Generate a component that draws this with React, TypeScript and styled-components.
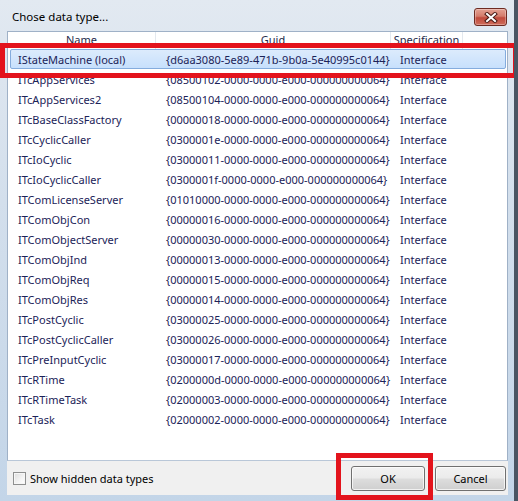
import React from "react";
import styled, { createGlobalStyle } from "styled-components";

const GlobalStyle = createGlobalStyle`
  html, body {
    margin: 0;
    padding: 0;
    background: #5d6570;
  }
  * {
    box-sizing: border-box;
  }
`;

const FONT = `"Noto Sans", "Open Sans", Arial, sans-serif`;

const Window = styled.main`
  position: relative;
  width: 518px;
  height: 501px;
  overflow: hidden;
  display: flex;
  flex-direction: column;
  background: linear-gradient(180deg, #e2e9f1 0%, #d3dfec 40%, #c3d5e8 100%);
  border-right: 4px solid #4a5563;
  font-family: ${FONT};
  font-size: 11px;
`;

const TitleBar = styled.header`
  height: 31px;
  flex: none;
  display: flex;
  justify-content: space-between;
  align-items: flex-start;
  padding: 0 7px 0 12px;

  .title {
    margin-top: 9px;
    font-size: 11.5px;
    color: #000;
  }
`;

const CloseBtn = styled.button`
  margin-top: 8px;
  width: 33px;
  height: 18px;
  padding: 0;
  border: 1px solid #6e2b22;
  border-radius: 3px;
  background: linear-gradient(180deg, #e4a193 0%, #d47c6b 45%, #c04a3c 55%, #cf6d5b 100%);
  box-shadow: inset 0 0 0 1px rgba(255, 255, 255, 0.3);
  display: flex;
  align-items: center;
  justify-content: center;
`;

const Client = styled.section`
  flex: 1;
  display: flex;
  flex-direction: column;
  margin: 0 6px 6px 7px;
  min-height: 0;
`;

const List = styled.div`
  flex: 1;
  background: #fff;
  border: 1px solid #9fb1c7;
  border-bottom-color: #b9c7d8;
  overflow: hidden;
`;

const COLS = "148px 235px 72px 1fr";

const Header = styled.div`
  display: grid;
  grid-template-columns: ${COLS};
  height: 17px;
  background: #fff;
  color: #1e2a4a;

  > span {
    display: flex;
    align-items: flex-start;
    justify-content: center;
    border-right: 1px solid #e3e8ee;
    line-height: 15px;
  }
  > span:last-child {
    border-right: none;
  }
`;

const Row = styled.div<{ $selected?: boolean }>`
  display: grid;
  grid-template-columns: ${COLS};
  height: 20px;
  align-items: center;
  color: #1b2358;
  margin: 0 1px 0 2px;
  border: 1px solid ${(p) => (p.$selected ? "#84acdd" : "transparent")};
  border-radius: 2px;
  background: ${(p) =>
    p.$selected ? "linear-gradient(180deg, #dcebfc 0%, #c7e0fc 100%)" : "transparent"};

  > span {
    white-space: nowrap;
  }
  .name {
    padding-left: 7px;
  }
  .guid {
    padding-left: 7px;
  }
  .spec {
    padding-left: 6px;
  }
`;

const Footer = styled.footer`
  height: 34px;
  flex: none;
  background: #f0f0f0;
  display: flex;
  align-items: center;
  padding: 0 2px 0 6px;
`;

const CheckLabel = styled.label`
  display: flex;
  align-items: center;
  gap: 4px;
  color: #000;
  flex: 1;

  .box {
    width: 13px;
    height: 13px;
    border: 1px solid #8e8f8f;
    background: linear-gradient(135deg, #dcdcdc 0%, #f4f4f4 60%, #ffffff 100%);
    box-shadow: inset 0 0 0 1px #f6f6f6;
  }
`;

const Button = styled.button<{ $w: number }>`
  width: ${(p) => p.$w}px;
  height: 25px;
  margin-left: 10px;
  border: 1px solid #707070;
  border-radius: 3px;
  background: linear-gradient(180deg, #f2f2f2 0%, #ebebeb 48%, #dddddd 52%, #cfcfcf 100%);
  box-shadow: inset 0 0 0 1px rgba(255, 255, 255, 0.7);
  font-family: ${FONT};
  font-size: 11px;
  color: #000;
  padding: 0;
`;

const Highlight = styled.div<{ $x: number; $y: number; $w: number; $h: number }>`
  position: absolute;
  left: ${(p) => p.$x}px;
  top: ${(p) => p.$y}px;
  width: ${(p) => p.$w}px;
  height: ${(p) => p.$h}px;
  border: 5px solid #e3131c;
  pointer-events: none;
`;

const tail = "-0000-0000-e000-000000000064}";

const items = [
  { name: "IStateMachine (local)", guid: "{d6aa3080-5e89-471b-9b0a-5e40995c0144}" },
  { name: "ITcAppServices", guid: "{08500102" + tail },
  { name: "ITcAppServices2", guid: "{08500104" + tail },
  { name: "ITcBaseClassFactory", guid: "{00000018" + tail },
  { name: "ITcCyclicCaller", guid: "{0300001e" + tail },
  { name: "ITcIoCyclic", guid: "{03000011" + tail },
  { name: "ITcIoCyclicCaller", guid: "{0300001f" + tail },
  { name: "ITComLicenseServer", guid: "{01010000" + tail },
  { name: "ITComObjCon", guid: "{00000016" + tail },
  { name: "ITComObjectServer", guid: "{00000030" + tail },
  { name: "ITComObjInd", guid: "{00000013" + tail },
  { name: "ITComObjReq", guid: "{00000015" + tail },
  { name: "ITComObjRes", guid: "{00000014" + tail },
  { name: "ITcPostCyclic", guid: "{03000025" + tail },
  { name: "ITcPostCyclicCaller", guid: "{03000026" + tail },
  { name: "ITcPreInputCyclic", guid: "{03000017" + tail },
  { name: "ITcRTime", guid: "{0200000d" + tail },
  { name: "ITcRTimeTask", guid: "{02000003" + tail },
  { name: "ITcTask", guid: "{02000002" + tail },
];

const App = () => {
  return (
    <>
      <GlobalStyle />
      <Window>
        <TitleBar>
          <span className="title">Chose data type...</span>
          <CloseBtn aria-label="Close">
            <svg width="14" height="11" viewBox="0 0 14 11">
              <path d="M3 2 L11 9 M11 2 L3 9" stroke="#4a1a14" strokeWidth="4" strokeLinecap="square" />
              <path d="M3 2 L11 9 M11 2 L3 9" stroke="#fff" strokeWidth="2" strokeLinecap="square" />
            </svg>
          </CloseBtn>
        </TitleBar>
        <Client>
          <List>
            <Header>
              <span>Name</span>
              <span>Guid</span>
              <span>Specification</span>
              <span />
            </Header>
            {items.map((item, index) => (
              <Row key={index} $selected={index === 0}>
                <span className="name">{item.name}</span>
                <span className="guid">{item.guid}</span>
                <span className="spec">Interface</span>
                <span />
              </Row>
            ))}
          </List>
          <Footer>
            <CheckLabel>
              <span className="box" />
              Show hidden data types
            </CheckLabel>
            <Button $w={74}>OK</Button>
            <Button $w={71}>Cancel</Button>
          </Footer>
        </Client>
        <Highlight $x={0} $y={43} $w={518} $h={35} />
        <Highlight $x={336} $y={453} $w={97} $h={47} />
      </Window>
    </>
  );
};

export default App;
